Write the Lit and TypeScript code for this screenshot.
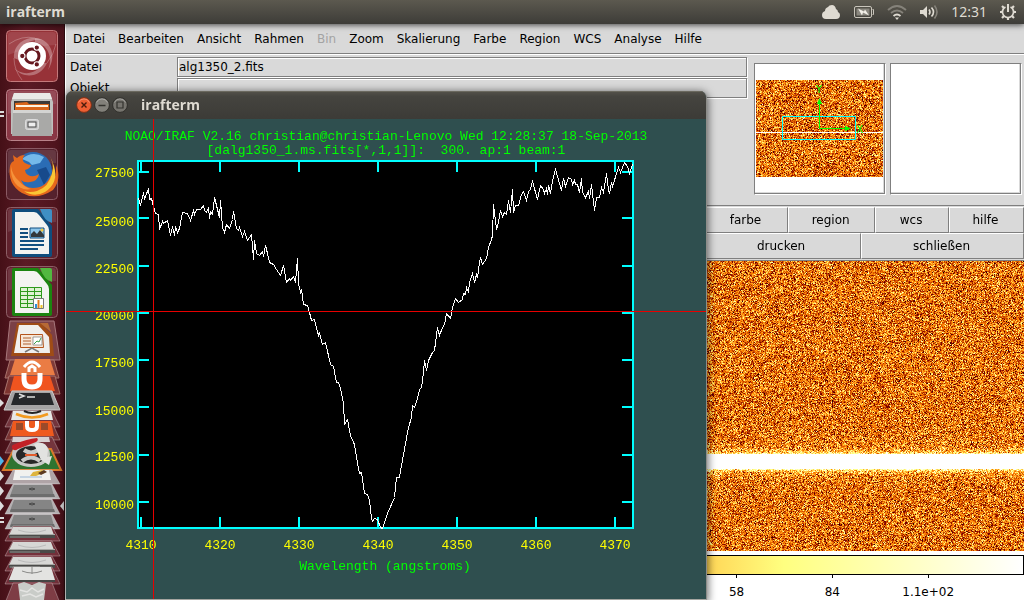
import { LitElement, html, svg, css } from "lit";
import { customElement, property } from "lit/decorators.js";

/* Black-body colour map, t in 0..1 */
function blackBody(t: number): [number, number, number] {
  const c = (v: number) => Math.max(0, Math.min(255, Math.round(v * 255)));
  return [c(t * 2), c((t - 0.25) * 2), c((t - 0.5) * 2)];
}

/* Small seeded generator so that a frame always looks the same */
function generator(seed: number) {
  let s = seed >>> 0;
  return () => {
    s = (s + 0x6d2b79f5) >>> 0;
    let t = Math.imul(s ^ (s >>> 15), 1 | s);
    t = (t + Math.imul(t ^ (t >>> 7), 61 | t)) ^ t;
    return ((t ^ (t >>> 14)) >>> 0) / 4294967296;
  };
}

@customElement("ccd-frame")
class CcdFrame extends LitElement {
  @property({ type: Number }) band = 0.69;
  @property({ type: Number }) spread = 0.026;
  @property({ type: Number }) halo = 0.03;
  @property({ type: Number }) seed = 7;

  static styles = css`
    :host { display: block; overflow: hidden; min-height: 0; }
    .pixels { display: block; width: 100%; height: 100%; }
  `;

  private observer?: ResizeObserver;

  render() {
    return html`<canvas class="pixels"></canvas>`;
  }

  firstUpdated() {
    this.paint();
    this.observer = new ResizeObserver(() => this.paint());
    this.observer.observe(this);
  }

  disconnectedCallback() {
    super.disconnectedCallback();
    this.observer?.disconnect();
  }

  private paint() {
    const canvas = this.renderRoot.querySelector("canvas") as HTMLCanvasElement;
    const w = this.clientWidth;
    const h = this.clientHeight;
    if (!w || !h || (canvas.width === w && canvas.height === h)) return;
    canvas.width = w;
    canvas.height = h;
    const ctx = canvas.getContext("2d")!;
    const image = ctx.createImageData(w, h);
    const rnd = generator(this.seed);
    const centre = this.band * h;
    const half = Math.max(0.6, this.spread * h);
    for (let y = 0; y < h; y++) {
      const d = Math.abs(y + 0.5 - centre) - half;
      const glow = d < 0 ? 1.2 : this.halo > 0 ? 0.3 * Math.exp(-d / 2) + 0.08 * Math.exp(-d / (this.halo * h)) : 0;
      for (let x = 0; x < w; x++) {
        const g = (rnd() + rnd() + rnd() + rnd() - 2) * 1.73;
        const [r, gr, b] = blackBody(0.475 + g * 0.15 + glow);
        const i = (y * w + x) * 4;
        image.data[i] = r;
        image.data[i + 1] = gr;
        image.data[i + 2] = b;
        image.data[i + 3] = 255;
      }
    }
    ctx.putImageData(image, 0, 0);
  }
}

const spectrum =
  "138,198 140,205 143,192 144,199 148,188 149,199 151,198 153,206 155,213 158,214 159,229 162,221 163,223 167,220 170,235 172,226 174,235 175,226 177,232 179,228 182,212 187,213 190,220 193,210 194,214 196,209 200,209 203,205 204,210 206,212 208,207 209,218 210,211 212,214 214,197 219,217 220,200 222,227 224,232 226,224 229,228 232,219 233,211 236,228 238,230 239,227 242,236 244,231 247,240 251,234 253,259 254,240 256,253 259,255 262,251 263,256 265,245 267,253 269,262 273,264 276,269 280,275 283,265 286,282 289,278 290,280 293,276 295,282 297,258 298,283 300,292 301,289 303,304 307,305 309,312 311,320 314,319 318,335 319,333 322,344 325,342 330,364 333,366 336,382 338,382 340,388 343,403 344,424 347,419 350,435 354,444 357,463 359,473 361,472 364,493 367,494 369,500 371,518 372,521 374,518 377,519 380,527 382,528 387,513 394,497 396,477 399,477 401,465 405,443 408,427 411,417 412,405 414,407 417,398 419,389 421,387 423,372 424,360 426,370 428,360 432,352 434,350 437,327 439,335 442,327 444,324 446,313 450,318 452,307 455,298 458,302 462,299 463,293 465,294 466,287 468,292 469,282 472,273 474,282 476,274 477,277 479,262 480,257 482,264 486,258 488,247 491,239 492,235 493,204 496,229 498,222 500,210 502,216 504,212 506,214 508,200 510,212 512,189 513,212 515,205 518,205 521,194 523,191 526,200 528,191 530,189 532,181 537,199 540,185 543,189 544,193 546,188 547,194 548,185 550,193 552,180 555,169 561,190 563,178 565,186 568,177 571,179 572,184 574,180 575,184 577,184 579,192 581,178 582,192 585,197 588,191 589,198 591,184 594,210 596,197 599,197 601,187 603,192 606,173 608,189 609,193 611,182 612,186 617,170 618,167 620,172 622,167 624,162 627,166 629,173 632,164";

const yTicks: [number, number, string][] = [
  [172, 177, "27500"], [218, 226, "25000"], [266, 273, "22500"], [313, 320, "20000"],
  [360, 367, "17500"], [407, 415, "15000"], [455, 461, "12500"], [502, 509, "10000"],
];
const xTicks: [number, string][] = [
  [141, "4310"], [220, "4320"], [299, "4330"], [378, "4340"], [457, "4350"], [536, "4360"], [615, "4370"],
];

@customElement("iraf-term")
class IrafTerm extends LitElement {
  static styles = css`
    :host {
      display: block;
      background: #2f4f4f;
      border-radius: 7px 7px 0 0;
      border-right: 1px solid #8d8d89;
      border-bottom: 1px solid #a5a5a0;
      box-shadow: 0 2px 9px 1px rgba(0, 0, 0, 0.6);
      overflow: hidden;
    }
    .title {
      display: flex;
      align-items: center;
      gap: 2px;
      height: 28px;
      padding-left: 10px;
      background: linear-gradient(#55534b, #45443f 20%, #3c3b37);
      box-shadow: inset 0 1px #6b695f;
    }
    .control { padding: 0; border: 0; background: none; width: 16px; height: 16px; display: block; }
    .control svg { display: block; }
    h1 { margin: 0 0 0 11px; font: bold 14px/20px "Open Sans", sans-serif; color: #dfdbd2; }
    .plot { display: block; width: 100%; }
    .label { font: 13px "Liberation Mono", monospace; white-space: pre; }
    .head { fill: #0f0; text-anchor: middle; }
    .x { fill: #ff0; text-anchor: middle; }
    .y { fill: #ff0; text-anchor: end; }
    .crisp { shape-rendering: crispEdges; }
  `;

  private control(name: string, fill: string, edge: string, mark: unknown) {
    return html`<button class="control" aria-label=${name}>
      <svg width="16" height="16" viewBox="0 0 16 16">
        <circle cx="8" cy="8" r="7.4" fill=${fill} stroke=${edge} stroke-width="1" />
        <path d="M2.5 5.5a6 6 0 0 1 11 0" fill="none" stroke="#fff" stroke-opacity=".3" />
        ${mark}
      </svg>
    </button>`;
  }

  render() {
    return html`
      <header class="title">
        ${this.control("Schließen", "#ee5f33", "#7a3018", svg`<path d="M5.5 5.5l5 5m0-5l-5 5" stroke="#4a1c0c" stroke-width="1.4" />`)}
        ${this.control("Minimieren", "#82807a", "#2f2e2a", svg`<path d="M4.5 8.5h7" stroke="#33322e" stroke-width="1.3" />`)}
        ${this.control("Maximieren", "#76746e", "#2f2e2a", svg`<path d="M5 5h6v6h-6z" fill="none" stroke="#33322e" stroke-width="1.2" />`)}
        <h1>irafterm</h1>
      </header>
      <svg class="plot" viewBox="66 119 640 480">
        <rect class="crisp" x="138" y="161" width="495" height="367" fill="#000" stroke="#0ff" stroke-width="2" />
        <g class="crisp" stroke="#0ff" stroke-width="2">
          ${yTicks.map(([y]) => svg`<path d="M138 ${y}h11M622 ${y}h11" />`)}
          ${xTicks.map(([x]) => svg`<path d="M${x} 161v11M${x} 517v11" />`)}
        </g>
        <text class="label head" x="386" y="140">NOAO/IRAF V2.16 christian@christian-Lenovo Wed 12:28:37 18-Sep-2013</text>
        <text class="label head" x="386" y="154">[dalg1350_1.ms.fits[*,1,1]]:  300. ap:1 beam:1</text>
        ${yTicks.map(([, base, t]) => svg`<text class="label y" x="134" y=${base}>${t}</text>`)}
        ${xTicks.map(([x, t]) => svg`<text class="label x" x=${x} y="549">${t}</text>`)}
        <text class="label head" x="385" y="570">Wavelength (angstroms)</text>
        <polyline class="crisp" points=${spectrum} fill="none" stroke="#fff" transform="translate(.5 .5)" />
        <path class="crisp" d="M153.5 119v480M66 311.5h640" stroke="#e80000" />
      </svg>
    `;
  }
}

const tile = (a: string, b: string) => svg`
  <rect x="6.5" y="3.5" width="51" height="51" rx="4" fill=${a} stroke=${b} />
  <path d="M8 28V8q0-3 3-3h42q3 0 3 3v10Q34 18 8 28z" fill="#fff" fill-opacity=".1" />`;

const sheet = (edge: string, light: string) => svg`
  <path d="M14 5h24l14 17v29q0 2-2 2H14q-2 0-2-2V7q0-2 2-2z" fill=${edge} />
  <path d="M40 5h10q2 0 2 2v12q-8-2-12-14z" fill=${light} />
  <path d="M15 8h19q3 0 5 3l8 10q2 2 2 5v24H15z" fill="#f3f3f1" />`;

const dash = svg`
  ${tile("#973238", "#c47a7c")}
  <path d="M14 31C13 15 30 6 45 14 36 10 18 15 19 33z" fill="#fff" fill-opacity=".3" />
  <path d="M35 11C50 12 58 28 48 43 53 32 49 18 35 15z" fill="#fff" fill-opacity=".3" />
  <path d="M47 36C41 50 24 53 14 41 22 49 36 48 43 36z" fill="#fff" fill-opacity=".3" />
  <path d="M14 31q0 12 8 22M35 11Q22 8 9 17M47 36q7-9 9-19" fill="none" stroke="#fff" stroke-opacity=".25" />
  <circle cx="32" cy="29" r="14" fill="#fff" />
  <circle cx="32" cy="29" r="7" fill="none" stroke="#65171e" stroke-width="3" />
  <g stroke="#fff" stroke-width="1.1" fill="#65171e">
    <circle cx="22.3" cy="29" r="2.7" /><circle cx="36.8" cy="20.6" r="2.7" /><circle cx="36.8" cy="37.4" r="2.7" />
  </g>`;

const files = svg`
  ${tile("#8a3745", "#b98289")}
  <path d="M0 26h4M0 30h4" stroke="#ddd" stroke-width="2" />
  <path d="M14 7h36l3 9v32H11V16z" fill="#c0c0be" />
  <path d="M14 7h36l2 6H12z" fill="#e9e9e7" />
  <path d="M14 15h36v10H14z" fill="#3c3a38" />
  <path d="M15 17l12-1 2 2h20v7H15z" fill="#d9661a" />
  <path d="M16 20h32" stroke="#fff3e0" stroke-width="2" />
  <path d="M13 24h38l1 26H12z" fill="#a9a9a7" />
  <path d="M13 24h38v3H13z" fill="#d4d4d2" />
  <rect x="25.500" y="33.500" width="13" height="10" rx="2" fill="#c9c9c9" stroke="#dcdcdc" />
  <rect x="28" y="36" width="8" height="5" fill="#eee" stroke="#444" />`;

const firefox = svg`
  ${tile("#55222d", "#8a5a64")}
  <circle cx="33" cy="26" r="19" fill="#2a6cb5" />
  <path d="M22 14q10-9 22-2l-4 6-8 2-3-3z" fill="#74b9ea" />
  <path d="M37 25l9-3 4 8-6 10z" fill="#174a8c" />
  <path d="M13 10q2 2 4 3 3-3 8-3-3 3-2 6 2 3 8 4-1 4-6 5 0 3 3 5 5 3 11-1-1 7-9 8-6 1-9-2 3 8 12 8 13 0 18-13 1 8-2 12 8-7 7-22 6 14-3 25Q36 56 22 48 7 39 10 21q1-4 4-5z" fill="#e6681c" />
  <path d="M48 8q7 10 4 20-3 14-15 18-7 2-13 0 10 7 21 1 14-9 9-26-2-7-6-13z" fill="#fbc634" />
  <path d="M11 21q1 9 8 15 5 6 12 8-10 2-16-6-5-7-4-17z" fill="#f6923a" />`;

const writer = svg`
  ${tile("#60222d", "#8c5f66")}${sheet("#0f4d7d", "#3f8fc4")}
  <path d="M20 25h8M20 29h8M20 33h8M20 37h24M20 41h24M20 45h18" stroke="#124f80" stroke-width="2" />
  <path d="M30 24h14v10H30z" fill="#8fc6ea" stroke="#124f80" />
  <path d="M31 33v-3l3-3 3 3 3-4 4 5v2z" fill="#33373a" /><circle cx="42" cy="26" r="1.500" fill="#f5c93a" />`;

const calc = svg`
  ${tile("#60222d", "#8c5f66")}${sheet("#1c8410", "#52b840")}
  <path d="M20.500 24.500h21v20h-21zM20 28.500h22M20 32.500h22M20 36.500h22M20 40.500h22M27.500 24v21M34.500 24v21" fill="#dff2d4" stroke="#2e9a1c" />
  <path d="M33.500 35.500h10v10h-10z" fill="#fff" stroke="#777" />
  <path d="M36 45v-4" stroke="#2f8fd8" stroke-width="2" /><path d="M38.500 45v-8" stroke="#e27a1b" stroke-width="2" /><path d="M41.500 45v-3" stroke="#eac22b" stroke-width="2" />`;

const slab = (y: number, h: number, fill: string) =>
  svg`<path d="M${13} ${y}H52l8 ${h}H5z" fill=${fill} stroke="#fff" stroke-opacity=".3" />`;

const cabinet = (y: number) => svg`
  ${slab(y, 15, "#b4b0b2")}
  <path d="M14 ${y + 1}h37l3 11H10z" fill="#858585" /><path d="M11 ${y + 10}h43l1 3H10z" fill="#6d6d6d" />
  <path d="M29 ${y + 5}q3-2 6 0-3 2-6 0z" fill="#777" stroke="#4c4c4c" />`;

const drive = (y: number) => svg`
  ${slab(y - 3, 15, "rgba(130,60,70,.7)")}
  <path d="M13 ${y - 2}h38l3 8H9z" fill="#d7d7d5" /><path d="M18 ${y + 1}q14 5 28 0" fill="none" stroke="#bbb" />
  <path d="M9 ${y + 5}h46v4H9z" fill="#4a4a48" /><path d="M9 ${y + 5.500}h46" stroke="#a8a8a5" /><path d="M10 ${y + 8}h30" stroke="#8e8e8b" />`;

const folded = svg`
  <path d="M10 321h44l6 39H6z" fill="#7b4046" stroke="#a7787c" />
  <path d="M17 323h24l11 12 2 21H11z" fill="#9f4c16" /><path d="M40 323h8l3 9z" fill="#b76a36" />
  <path d="M19 325h19l11 12 1 16H14z" fill="#f0efed" />
  <path d="M20.500 334.500h22l1 13h-23z" fill="#f7e7d8" stroke="#b4541c" />
  <path d="M23 338h8M23 341h8M23 344h8" stroke="#b06030" /><path d="M33 337h9v8h-9z" fill="#fff" stroke="#777" stroke-width=".7" /><path d="M34 344l3-3 2 1 2-4" fill="none" stroke="#3aa04a" />
  <path d="M25 352l7-4 7 4" fill="none" stroke="#777" stroke-width="1.500" />
  <path d="M10 360h44l5 18H5z" fill="#7e3a38" stroke="#a8736c" />
  <path d="M15 359h35l5 16H10z" fill="#ea7c44" />
  <path d="M24 367q8-10 16 0M29 372v-4l3-2 3 2v4" fill="none" stroke="#fff" stroke-width="3" />
  <path d="M9 376h46l5 18H4z" fill="#7e3430" stroke="#a8736c" />
  <path d="M14 376h36l5 15H10z" fill="#f0541f" />
  <path d="M24 373v6q0 8 8 8t8-8v-6" fill="none" stroke="#fff" stroke-width="5" />
  <path d="M12 391h40l8 19H4z" fill="#a5a3a4" stroke="#ccc" />
  <path d="M15 393h35l4 12H11z" fill="#26282b" /><path d="M19 394l5 2-5 2M27 397h8" fill="none" stroke="#ddd" stroke-width="1.500" />
  <path d="M0 399l4 4-4 4zM0 471l4 5-4 5zM0 486l4 5-4 5zM0 501l4 5-4 5z" fill="#ddd" /><path d="M0 456l4 5-4 5z" fill="#4fb4ea" />
  <path d="M0 518h4M0 522h4" stroke="#ddd" stroke-width="2" /><path d="M64 501l-4 5 4 5z" fill="#ddd" />
  ${slab(411, 16, "#74353d")}
  <path d="M13 411h38l2 9H11z" fill="#e8e8e6" /><path d="M24 411q8 4 17 0" stroke="#222" stroke-width="2" fill="none" />
  <path d="M16 414q16 7 32 0" stroke="#f29a1f" stroke-width="2.500" fill="none" />
  ${slab(422, 18, "#7a3433")}
  <path d="M13 421h38l3 15H10z" fill="#ef5a1e" /><path d="M16 423h7v7h-7zM41 423h7v7h-7z" fill="#9a4a2a" />
  <path d="M27 421v5q0 4 5 4t5-4v-5" fill="none" stroke="#fff" stroke-width="4" />
  ${slab(437, 16, "#74353d")}
  <path d="M13 437h36l1 5H12z" fill="#d8d0d0" />
  <path d="M14 449h37l10 21H3z" fill="#2f7430" stroke="#d8792c" stroke-width="2" />
  <ellipse cx="31" cy="454" rx="19" ry="13" fill="#c9c9c7" /><ellipse cx="31" cy="455" rx="15" ry="9" fill="#272727" />
  <path d="M24 450q7 5 14 0M22 461q9-7 18 0" fill="none" stroke="#c9c9c7" stroke-width="4" /><path d="M25 455h12" stroke="#e25b2b" stroke-width="2" />
  <path d="M34 444q12-4 14 6l-1 7 5-1-3 9-8-5z" fill="#e2e2e0" />
  <path d="M12 448q2 4 6 1l18-7q3-2 1-4-10 1-22 6-4 1-3 4z" fill="#c22027" />
  ${slab(470, 14, "#b0a4a7")}<path d="M15 470h34l2 10H13z" fill="#f1f1ef" />
  <path d="M20 477h22" stroke="#9bb7d6" /><path d="M30 476l3-4 9-2 4 2-10 4z" fill="#ddb43e" /><path d="M38 473l6-3 3 2-6 3z" fill="#5b3a22" />
  ${cabinet(484)}${cabinet(499)}${cabinet(514)}
  ${drive(529)}${drive(544)}${drive(559)}
  ${slab(567, 17, "rgba(130,60,70,.7)")}
  <path d="M14 567h37l4 13H9z" fill="#e3e3e1" /><path d="M9 580h46v2H9z" fill="#454543" /><path d="M32 567v7M22 571q10 4 20 0" stroke="#8b8b89" fill="none" />
  ${slab(583, 20, "#7e3d45")}
  <path d="M18 584l6-2 8 3 7-3 7 2-2 16H20z" fill="#c9ccc8" /><path d="M20 590l7 2 5-4 6 4 6-3M22 596l8-2 6 3 7-3" fill="none" stroke="#e4e4e2" stroke-width="1.500" />`;

@customElement("app-root")
class AppRoot extends LitElement {
  static styles = css`
    :host {
      display: flex;
      flex-direction: column;
      position: relative;
      height: 100vh;
      overflow: hidden;
      font: 12px/16px "DejaVu Sans", sans-serif;
      color: #000;
      background: #d9d9d9;
    }
    button { font: inherit; color: inherit; cursor: default; }
    .panel {
      display: flex;
      align-items: center;
      justify-content: space-between;
      flex: none;
      height: 24px;
      padding: 0 7px 0 6px;
      background: linear-gradient(#5c594f, #3d3c38);
      color: #dfdbd2;
      box-shadow: 0 1px 6px rgba(0, 0, 0, 0.7);
      z-index: 1;
    }
    .app { font: bold 14px/20px "Open Sans", sans-serif; }
    .tray { display: flex; align-items: center; gap: 12px; font: 14px/20px "Noto Sans", sans-serif; }
    .tray svg { display: block; }
    .desk { flex: 1; display: flex; min-height: 0; }
    .launcher {
      flex: none;
      width: 65px;
      padding-top: 3px;
      box-sizing: border-box;
      overflow: hidden;
      background: linear-gradient(90deg, #451017, #5b1a25 40%, #4c131c);
      border-right: 1px solid #2c0a0f;
    }
    .launch { display: block; padding: 0; border: 0; background: none; }
    .launch svg, .stack { display: block; }
    .ds9 { flex: 1; min-width: 0; display: flex; flex-direction: column; border-left: 1px solid #fff; }
    .menus { display: flex; gap: 13px; padding: 7px; flex: none; border-bottom: 1px solid #7f7f7f; box-sizing: border-box; height: 30px; }
    .menu { padding: 0; border: 0; background: none; line-height: 16px; }
    .menu[disabled] { color: #a3a3a3; }
    .info {
      display: flex;
      gap: 4px;
      flex: none;
      box-sizing: border-box;
      height: 152px;
      padding: 2px 2px 0 4px;
      border-top: 1px solid #fff;
      border-bottom: 1px solid #7f7f7f;
    }
    .fields { flex: 1; display: grid; grid-template-columns: 107px 1fr; align-content: start; row-gap: 1px; padding-right: 3px; }
    .fields label { line-height: 20px; }
    .fields input {
      min-width: 0;
      height: 20px;
      box-sizing: border-box;
      padding: 0 1px;
      font: inherit;
      color: #000;
      background: #d9d9d9;
      border: 1px solid #7f7f7f;
      box-shadow: 1px 1px #fff, inset 1px 1px #fff;
      border-radius: 0;
    }
    .view {
      flex: none;
      width: 132px;
      height: 132px;
      margin-top: 6px;
      box-sizing: border-box;
      border: 1px solid;
      border-color: #7f7f7f #fff #fff #7f7f7f;
      box-shadow: inset -1px -1px #7f7f7f, inset -2px -2px #d9d9d9;
      background: #fff;
    }
    .panner { display: grid; padding: 16px 2px 17px 1px; }
    .panner > * { grid-area: 1 / 1; min-width: 0; }
    .marks { width: 100%; height: 100%; }
    .marks text { font: 10px "DejaVu Sans", sans-serif; fill: #0f0; text-anchor: middle; }
    .bar { display: flex; flex: none; }
    .bar.top { padding: 1px 0 0 639px; }
    .bar.low { padding: 0 0 1px 637px; }
    .push {
      height: 26px;
      padding: 0 2px 0 0;
      border: 1px solid;
      border-color: #fff #7f7f7f #7f7f7f #fff;
      background: #d9d9d9;
      min-width: 0;
    }
    .w80 { flex: 83; } .w88 { flex: 88; } .w73 { flex: 73; } .w75 { flex: 75; }
    .w157 { flex: 157; } .w162 { flex: 162; }
    .frame { flex: 1; border-top: 1px solid #7f7f7f; }
    .scale { flex: none; background: #fff; padding-top: 4px; }
    .ramp {
      height: 18px;
      border: 1px solid #000;
      background: linear-gradient(90deg, #000, #800000 25%, #ff8000 50%, #ffff80 75%, #fff);
    }
    .ticks { display: flex; padding-left: 65%; }
    .tick { flex: none; width: calc(100% / 3.5); text-align: center; }
    .tick::before { content: ""; display: block; width: 1px; height: 3px; margin: 0 auto 6px; background: #000; }
    .term { position: absolute; left: 66px; top: 91px; width: 640px; z-index: 2; }
  `;

  private menus = ["Datei", "Bearbeiten", "Ansicht", "Rahmen", "Bin", "Zoom", "Skalierung", "Farbe", "Region", "WCS", "Analyse", "Hilfe"];
  private apps: [string, unknown][] = [["Dash", dash], ["Dateien", files], ["Firefox", firefox], ["Writer", writer], ["Calc", calc]];

  render() {
    return html`
      <header class="panel">
        <span class="app">irafterm</span>
        <div class="tray">
          <svg width="20" height="18" viewBox="0 0 20 18"><path d="M5 16q-4 0-4-4 0-3 3-4 0-3 3-4 1-2 4-2t4 4q2 1 2 3 2 1 2 3 0 4-4 4z" fill="#dfdbd2" /></svg>
          <svg width="22" height="18" viewBox="0 0 22 18"><rect x="1.500" y="3.500" width="17" height="11" rx="1.500" fill="none" stroke="#c9c5bb" /><path d="M19.500 6.500h1v5h-1" fill="none" stroke="#c9c5bb" /><rect x="3.500" y="5.500" width="13" height="7" fill="#8a877f" /><path d="M5 5.500l6 3 1-2 4 6-6-3-1 3z" fill="#f2efe8" /></svg>
          <svg width="20" height="18" viewBox="0 0 20 18" fill="none" stroke-width="1.800"><path d="M1 7q9-8 18 0M4 10q6-5 12 0" stroke="#85827a" /><path d="M6.500 13q3.500-3 7 0" stroke="#dfdbd2" /><path d="M8 14.500h4l-2 2.500z" fill="#dfdbd2" /></svg>
          <svg width="20" height="18" viewBox="0 0 20 18" fill="none" stroke-width="1.600"><path d="M1 7h3l4-4v12l-4-4H1z" fill="#dfdbd2" /><path d="M10 6.500q2 2.500 0 5M12.500 4.500q4 4.500 0 9" stroke="#dfdbd2" /><path d="M15.500 2.500q5 6.500 0 13" stroke="#85827a" /></svg>
          <time>12:31</time>
          <svg width="18" height="18" viewBox="0 0 18 18" fill="none" stroke="#dfdbd2"><path d="M6.500 4a5.600 5.600 0 1 0 5 0" stroke-width="1.800" /><path d="M9 1v8" stroke-width="2" /><path d="M3 3l2 2M15 3l-2 2M1 9h2.500M17 9h-2.500M3 15l2-2M15 15l-2-2M9 17v-2.500" stroke-width="2.200" /></svg>
        </div>
      </header>
      <div class="desk">
        <nav class="launcher">
          ${this.apps.map(([name, icon]) => html`<button class="launch" aria-label=${name}><svg width="64" height="59" viewBox="0 0 64 59">${icon}</svg></button>`)}
          <svg class="stack" width="64" height="278" viewBox="0 322 64 278" overflow="visible">${folded}</svg>
        </nav>
        <main class="ds9">
          <div class="menus">
            ${this.menus.map((m) => html`<button class="menu" ?disabled=${m === "Bin"}>${m}</button>`)}
          </div>
          <section class="info">
            <div class="fields">
              <label for="file">Datei</label><input id="file" value="alg1350_2.fits" />
              <label for="object">Objekt</label><input id="object" />
            </div>
            <div class="view panner">
              <ccd-frame seed="21" band="0.540" spread="0" halo="0"></ccd-frame>
              <svg class="marks" viewBox="0 0 127 97" preserveAspectRatio="none">
                <path d="M26.500 36.500h73v23h-73z" fill="none" stroke="#0ff" />
                <path d="M63.500 22v26.500H92" fill="none" stroke="#0f0" />
                <path d="M63.500 18l2.500 6h-5zM95 48.500l-6 2.500v-5z" fill="#0f0" />
                <text x="63" y="13">Y</text><text x="104" y="53">X</text>
              </svg>
            </div>
            <div class="view"></div>
          </section>
          <div class="bar top">
            <button class="push w80">farbe</button><button class="push w88">region</button><button class="push w73">wcs</button><button class="push w75">hilfe</button>
          </div>
          <div class="bar low">
            <button class="push w157">drucken</button><button class="push w162">schließen</button>
          </div>
          <ccd-frame class="frame" seed="5" band="0.692"></ccd-frame>
          <footer class="scale">
            <div class="ramp"></div>
            <div class="ticks"><span class="tick">58</span><span class="tick">84</span><span class="tick">1.1e+02</span></div>
          </footer>
        </main>
      </div>
      <iraf-term class="term"></iraf-term>
    `;
  }
}
